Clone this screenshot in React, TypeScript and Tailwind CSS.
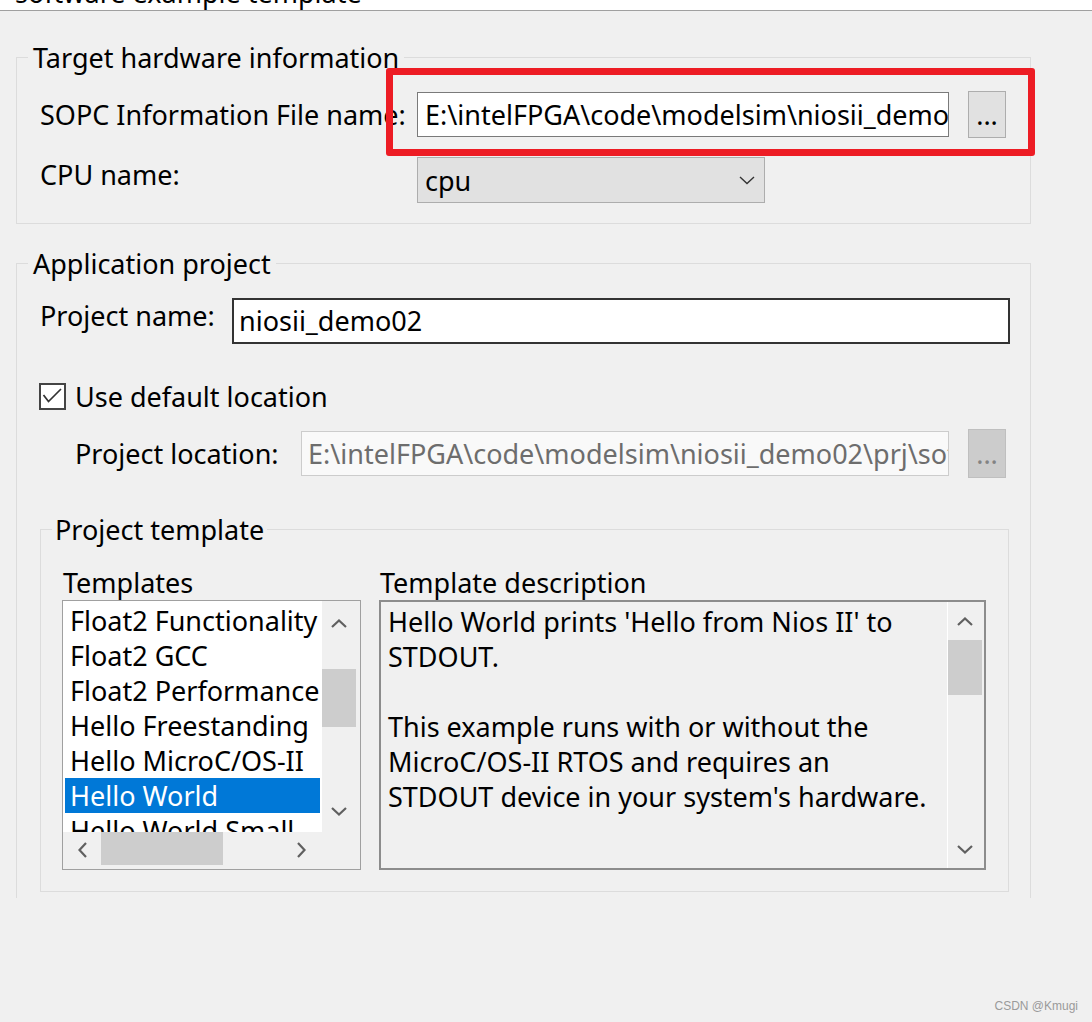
import React from 'react';

type Dir = 'up' | 'down' | 'left' | 'right';

// small scrollbar chevrons, Windows 10 style
const Arrow = ({ dir, color = '#606060', width = 2.2 }: { dir: Dir; color?: string; width?: number }) => {
  const horiz = dir === 'left' || dir === 'right';
  const points: Record<Dir, string> = {
    up: '1,8 8,1.5 15,8',
    down: '1,1 8,7.5 15,1',
    left: '8,1 1.5,8 8,15',
    right: '1,1 7.5,8 1,15',
  };
  return (
    <svg
      width={horiz ? 9 : 16}
      height={horiz ? 16 : 9}
      viewBox={horiz ? '0 0 9 16' : '0 0 16 9'}
    >
      <polyline points={points[dir]} fill="none" stroke={color} strokeWidth={width} />
    </svg>
  );
};

const templates = [
  'Float2 Functionality',
  'Float2 GCC',
  'Float2 Performance',
  'Hello Freestanding',
  'Hello MicroC/OS-II',
  'Hello World',
  'Hello World Small',
];

const description = [
  "Hello World prints 'Hello from Nios II' to",
  'STDOUT.',
  '',
  'This example runs with or without the',
  'MicroC/OS-II RTOS and requires an',
  "STDOUT device in your system's hardware.",
];

const TemplateList = () => (
  <div className="h-[270px] border border-[#a0a0a0] bg-[#f0f0f0] flex flex-col">
    <div className="flex h-[231px]">
      <div className="w-[259px] bg-white overflow-hidden pt-[2px] px-[2px]">
        {templates.map((t) => (
          <div
            key={t}
            className={`h-[35px] leading-[35px] pl-[5px] whitespace-nowrap ${
              t === 'Hello World' ? 'bg-[#0078d7] text-white' : ''
            }`}
          >
            {t}
          </div>
        ))}
      </div>
      <div className="w-[34px] flex flex-col">
        <div className="h-[44px] flex items-center justify-center">
          <Arrow dir="up" />
        </div>
        <div className="h-[24px]" />
        <div className="h-[58px] bg-[#cdcdcd]" />
        <div className="flex-1" />
        <div className="h-[42px] flex items-center justify-center">
          <Arrow dir="down" />
        </div>
      </div>
    </div>
    <div className="flex h-[36px] w-[259px]">
      <div className="w-[38px] flex items-center justify-center">
        <Arrow dir="left" />
      </div>
      <div className="w-[122px] h-[33px] bg-[#cdcdcd]" />
      <div className="flex-1" />
      <div className="w-[42px] flex items-center justify-center">
        <Arrow dir="right" />
      </div>
    </div>
  </div>
);

const DescriptionBox = () => (
  <div className="h-[270px] border-2 border-[#8c8c8c] bg-[#f0f0f0] flex">
    <div className="flex-1 pl-[7px] pt-[2px] leading-[35px] whitespace-nowrap overflow-hidden">
      {description.map((line, i) => (
        <div key={i} className="h-[35px]">
          {line}
        </div>
      ))}
    </div>
    <div className="w-[35px] mr-[2px] border-l border-white flex flex-col">
      <div className="h-[38px] flex items-center justify-center">
        <Arrow dir="up" />
      </div>
      <div className="h-[55px] bg-[#cdcdcd]" />
      <div className="flex-1" />
      <div className="h-[38px] flex items-center justify-center">
        <Arrow dir="down" />
      </div>
    </div>
  </div>
);

const BrowseButton = ({ disabled }: { disabled?: boolean }) => (
  <div
    className={`ml-[19px] w-[38px] flex items-center justify-center border leading-[35px] ${
      disabled
        ? 'h-[49px] bg-[#cccccc] border-[#bfbfbf] text-[#838383]'
        : 'h-[47px] bg-[#e1e1e1] border-[#adadad]'
    }`}
  >
    ...
  </div>
);

export default function App() {
  return (
    <div className="relative w-[1092px] h-[1022px] overflow-hidden bg-[#f0f0f0] text-black text-[27px] font-['Noto_Sans',sans-serif]">
      {/* wizard header, only the tail of the wrapped subtitle is visible */}
      <div className="h-[11px] bg-white border-b border-[#a0a0a0] overflow-hidden">
        <div className="mt-[-25px] pl-[15px] leading-[35px] whitespace-nowrap">software example template</div>
      </div>

      <div className="pl-[16px]">
        <fieldset className="mt-[29px] w-[1015px] border border-[#dcdcdc] pb-[20px]">
          <legend className="ml-[11px] px-[5px] leading-[35px]">Target hardware information</legend>
          <div className="pl-[23px]">
            <div className="mt-[16px] flex items-center h-[47px]">
              <div className="w-[377px] shrink-0 leading-[35px] whitespace-nowrap">SOPC Information File name:</div>
              <div className="w-[532px] h-[45px] shrink-0 border border-[#7a7a7a] bg-white pl-[7px] leading-[43px] whitespace-nowrap overflow-hidden">
                {'E:\\intelFPGA\\code\\modelsim\\niosii_demo02\\prj\\niosii_demo02.sopcinfo'}
              </div>
              <BrowseButton />
            </div>
            <div className="mt-[19px] flex items-start">
              <div className="w-[377px] shrink-0 leading-[35px]">CPU name:</div>
              <div className="w-[348px] h-[46px] border border-[#adadad] bg-[#e1e1e1] flex items-center justify-between pl-[7px] pr-[9px] leading-[35px]">
                <span>cpu</span>
                <Arrow dir="down" color="#333333" width={1.4} />
              </div>
            </div>
          </div>
        </fieldset>

        <fieldset className="mt-[22px] w-[1015px] border border-b-0 border-[#dcdcdc] pb-[6px]">
          <legend className="ml-[11px] px-[5px] leading-[35px]">Application project</legend>
          <div className="pl-[23px] pr-[20px]">
            <div className="mt-[17px] flex items-start">
              <div className="w-[192px] shrink-0 leading-[35px]">Project name:</div>
              <div className="flex-1 h-[46px] border-2 border-[#333333] bg-white pl-[5px] leading-[42px]">niosii_demo02</div>
            </div>

            <div className="mt-[35px] h-[35px] flex items-center">
              <div className="ml-[-1px] w-[27px] h-[27px] border-2 border-[#444444] bg-white">
                <svg width="23" height="23" viewBox="0 0 23 23">
                  <polyline points="2.5,10 7.5,16.5 20,4" fill="none" stroke="#333333" strokeWidth="1.7" />
                </svg>
              </div>
              <div className="ml-[9px] leading-[35px]">Use default location</div>
            </div>

            <div className="mt-[15px] h-[49px] flex items-center pl-[35px]">
              <div className="w-[226px] shrink-0 leading-[35px]">Project location:</div>
              <div className="w-[648px] h-[45px] shrink-0 border border-[#cccccc] bg-[#f9f9f9] text-[#6d6d6d] pl-[6px] leading-[43px] whitespace-nowrap overflow-hidden">
                {'E:\\intelFPGA\\code\\modelsim\\niosii_demo02\\prj\\software\\niosii_demo02'}
              </div>
              <BrowseButton disabled />
            </div>

            <fieldset className="mt-[34px] w-[969px] border border-[#dcdcdc] pb-[21px]">
              <legend className="ml-[11px] px-[3px] leading-[35px]">Project template</legend>
              <div className="mt-[18px] pl-[21px] flex gap-[18px]">
                <div className="w-[299px] shrink-0">
                  <div className="leading-[35px] pl-[1px]">Templates</div>
                  <TemplateList />
                </div>
                <div className="w-[607px] shrink-0">
                  <div className="leading-[35px] pl-[1px]">Template description</div>
                  <DescriptionBox />
                </div>
              </div>
            </fieldset>
          </div>
        </fieldset>
      </div>

      {/* annotation drawn over the screenshot */}
      <div className="absolute left-[386px] top-[68px] w-[649px] h-[88px] border-[7px] border-[#ed1c24] rounded-[3px]" />

      <div className="absolute right-[14px] bottom-[9px] text-[12px] leading-[14px] text-[#9a9a9a] font-['Liberation_Sans',sans-serif]">
        CSDN @Kmugi
      </div>
    </div>
  );
}
